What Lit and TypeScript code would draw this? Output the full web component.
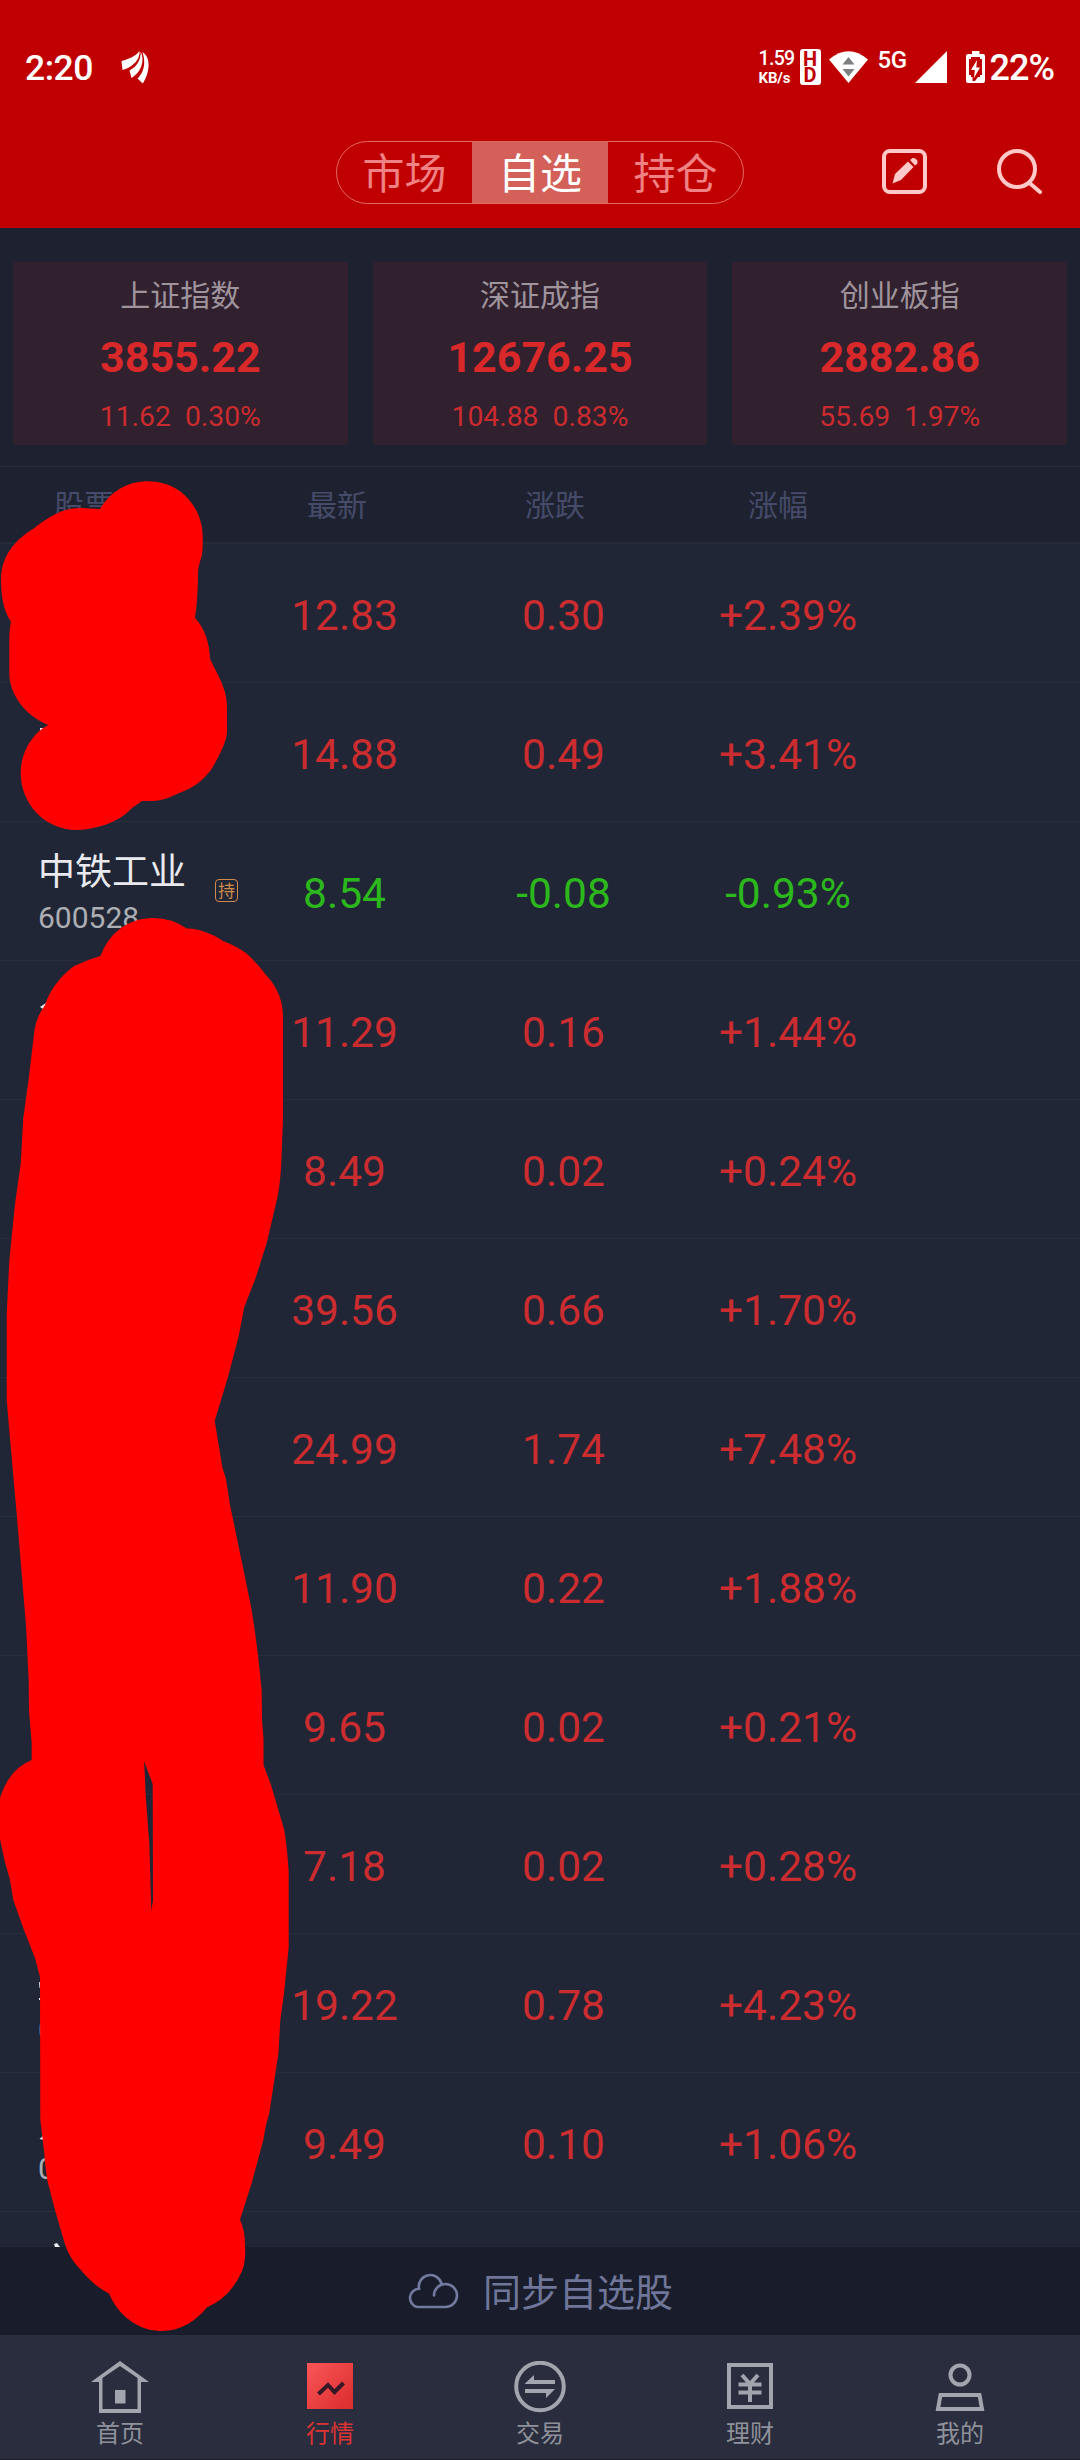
import { LitElement, html, svg, css, nothing } from "lit";
import { customElement, property } from "lit/decorators.js";

interface IndexQuote { name: string; value: string; change: string; pct: string; }
interface Stock { name?: string; code?: string; held?: boolean; price: string; diff: string; pct: string; }

const INDICES: IndexQuote[] = [
  { name: "上证指数", value: "3855.22", change: "11.62", pct: "0.30%" },
  { name: "深证成指", value: "12676.25", change: "104.88", pct: "0.83%" },
  { name: "创业板指", value: "2882.86", change: "55.69", pct: "1.97%" },
];

const STOCKS: Stock[] = [
  { price: "12.83", diff: "0.30", pct: "+2.39%" },
  { price: "14.88", diff: "0.49", pct: "+3.41%" },
  { name: "中铁工业", code: "600528", held: true, price: "8.54", diff: "-0.08", pct: "-0.93%" },
  { price: "11.29", diff: "0.16", pct: "+1.44%" },
  { price: "8.49", diff: "0.02", pct: "+0.24%" },
  { price: "39.56", diff: "0.66", pct: "+1.70%" },
  { price: "24.99", diff: "1.74", pct: "+7.48%" },
  { price: "11.90", diff: "0.22", pct: "+1.88%" },
  { price: "9.65", diff: "0.02", pct: "+0.21%" },
  { price: "7.18", diff: "0.02", pct: "+0.28%" },
  { code: "0", price: "19.22", diff: "0.78", pct: "+4.23%" },
  { code: "0", price: "9.49", diff: "0.10", pct: "+1.06%" },
];

@customElement("status-bar")
export class StatusBar extends LitElement {
  static styles = css`
    :host { display: flex; height: 117px; padding: 17px 26px 0 25px; box-sizing: border-box;
      align-items: center; justify-content: space-between; color: #fff;
      font-family: Roboto, "Liberation Sans", sans-serif; font-weight: 500; }
    svg { display: block; flex: none; }
    .left, .right { display: flex; align-items: center; }
    .time { font-size: 35.5px; line-height: 40px; letter-spacing: -0.5px; margin-top: 2px; }
    .app { margin-left: 28px; }
    .speed { width: 40px; font-size: 19.5px; line-height: 20px; letter-spacing: -0.7px; margin-top: 1px; }
    .unit { font-size: 15px; line-height: 18px; letter-spacing: -0.2px; font-weight: 700; }
    .hd { margin-left: 1px; width: 21px; height: 36px; box-sizing: border-box; border-radius: 3px; background: #fff;
      color: #c00000; display: grid; grid-template-rows: 16px 16px; padding-top: 2px; text-align: center;
      font-size: 20px; line-height: 16px; font-weight: 700; }
    .wifi { margin-left: 8px; }
    .net { font-size: 24px; line-height: 24px; margin: 0 6px 14px 10px; width: 31px; letter-spacing: -0.5px; }
    .battery { margin: 0 5px 0 19px; }
    .pct { font-size: 36px; line-height: 40px; letter-spacing: -1px; margin-top: 2px; }
  `;
  render() {
    return html`
      <div class="left">
        <span class="time">2:20</span>
        <svg class="app" width="29" height="34" viewBox="0 0 29 34" fill="#fff">
          <path d="M0.500 11C8 9 15 6 18.500 1C19.500 9 12 17 1.500 20Z"/>
          <path d="M19.700 1.500C24.500 12 19 23 10.500 28L8.500 20.500C15 17 20 11 19.700 1.500Z"/>
          <path d="M21.500 2C31 8 28 24 21.800 33.500L16.500 28.500C23 22 25 13 21.500 2Z"/>
        </svg>
      </div>
      <div class="right">
        <div class="speed">1.59<div class="unit">KB/s</div></div>
        <div class="hd"><span>H</span><span>D</span></div>
        <svg class="wifi" width="39" height="32" viewBox="0 0 39 32">
          <path d="M0 8.500Q19.500 -8 39 8.500L19.500 32Z" fill="#fff"/>
          <path d="M13.500 13.500L19.500 6L25.500 13.500ZM13.500 18L19.500 25.500L25.500 18Z" fill="#7c8082"/>
        </svg>
        <span class="net">5G</span>
        <svg width="32" height="32" viewBox="0 0 32 32"><path d="M32 0V32H0Z" fill="#fff"/></svg>
        <svg class="battery" width="19" height="32" viewBox="0 0 19 32">
          <path d="M6 0H13.500V3H17Q19 3 19 5V30Q19 32 17 32H2Q0 32 0 30V5Q0 3 2 3H6Z" fill="#fff"/>
          <path d="M5 6H14V8H16V24H14V26H12L9 30H6.500V26H5V24H3V8H5Z" fill="#c00000"/>
          <path d="M11 9L5 19H8.800L8 27L14 16.500H10.300Z" fill="#fff"/>
        </svg>
        <span class="pct">22%</span>
      </div>`;
  }
}

@customElement("top-nav")
export class TopNav extends LitElement {
  static styles = css`
    :host { display: grid; grid-template-columns: 336px 408px 1fr; height: 111px; align-items: start; }
    .tabs { grid-column: 2; margin-top: 24px; height: 63px; box-sizing: border-box; display: grid;
      grid-template-columns: 135px 136px 1fr; border: 1px solid #e26a66; border-radius: 32px;
      overflow: hidden; font: 42px/58px "Noto Sans CJK SC", sans-serif; color: #ee8284; text-align: center; }
    .on { background: #d4605a; color: #fff; margin: -1px 0; line-height: 60px; }
    .tools { display: flex; gap: 70px; padding: 32px 0 0 138px; }
  `;
  render() {
    return html`
      <div class="tabs"><span>市场</span><span class="on">自选</span><span>持仓</span></div>
      <div class="tools">
        <svg width="45" height="45" viewBox="0 0 45 45">
          <rect x="2" y="2" width="41" height="41" rx="6" fill="none" stroke="#ffc9ca" stroke-width="4"/>
          <path d="M10.500 34.500L13 25L26 12.500L31.500 18L19 31ZM28 11L30.500 9Q33 8.500 35 11Q36.500 13.500 35 15L33 16.500Z" fill="#ffc9ca"/>
        </svg>
        <svg width="45" height="45" viewBox="0 0 45 45" fill="none" stroke="#ffc9ca" stroke-width="4" stroke-linecap="round">
          <circle cx="20" cy="20" r="18"/><path d="M32.500 34L43 43"/>
        </svg>
      </div>`;
  }
}

@customElement("index-card")
export class IndexCard extends LitElement {
  @property({ attribute: false }) quote!: IndexQuote;
  static styles = css`
    :host { display: flex; flex-direction: column; align-items: center; background: #31212f;
      border-radius: 3px; height: 183px; font-family: Roboto, sans-serif; }
    .name { font: 30px/40px "Noto Sans CJK SC", sans-serif; color: #9f949c; margin-top: 11px; }
    .value { font-size: 43px; line-height: 50px; font-weight: 700; color: #d9282a; margin-top: 19px; }
    .delta { font-size: 28.3px; line-height: 34px; color: #cb2b2e; margin-top: 18px; white-space: pre; }
  `;
  render() {
    const q = this.quote;
    return html`<div class="name">${q.name}</div><div class="value">${q.value}</div>
      <div class="delta">${q.change}  ${q.pct}</div>`;
  }
}

@customElement("stock-row")
export class StockRow extends LitElement {
  @property({ attribute: false }) stock!: Stock;
  static styles = css`
    :host { display: grid; grid-template-columns: 235px 219px 219px 230px; height: 139px; box-sizing: border-box;
      border-bottom: 1px solid #282d3c; align-items: center; font-family: Roboto, sans-serif; }
    .id { display: flex; align-items: center; justify-content: space-between; height: 138px; padding-left: 38px; margin-right: -3px; }
    .name { font: 37px/48px "Noto Sans CJK SC", sans-serif; color: #e8eaef; height: 48px; margin-top: -3px; }
    .code { font-size: 30px; line-height: 34px; color: #acaeb3; margin-top: 8px; }
    .held { width: 23px; height: 23px; box-sizing: border-box; border: 1px solid #cf8a4c; border-radius: 4px;
      color: #cf8a4c; font: 17px/20px "Noto Sans CJK SC", sans-serif; text-align: center; margin-top: -1px; }
    .num { font-size: 42.5px; line-height: 50px; text-align: center; padding-top: 5px; color: #cb2c2f; }
    .down { color: #2cb81c; }
  `;
  render() {
    const s = this.stock;
    const cls = s.diff.startsWith("-") ? "num down" : "num";
    return html`
      <div class="id">
        <div><div class="name">${s.name ?? nothing}</div><div class="code">${s.code ?? nothing}</div></div>
        ${s.held ? html`<span class="held">持</span>` : nothing}
      </div>
      <span class=${cls}>${s.price}</span><span class=${cls}>${s.diff}</span><span class=${cls}>${s.pct}</span>`;
  }
}

const G = "#a3a5ae";
const NAV = [
  { label: "首页", icon: svg`
      <path fill-rule="evenodd" fill=${G} d="M30 0L59 21H51V52H9V21H1ZM30 5L12.500 17V48H47.500V17Z"/>
      <rect x="25" y="29" width="10.500" height="13.500" fill=${G}/>` },
  { label: "行情", on: true, icon: svg`<defs><linearGradient id="g" x1="0" y1="0" x2="1" y2="1">
      <stop offset="0" stop-color="#fb5658"/><stop offset="1" stop-color="#d92c2d"/></linearGradient></defs>
      <rect x="7" y="2" width="46" height="46" fill="url(#g)"/>
      <path d="M18.500 33L28 24L34.500 31L43.500 22" fill="none" stroke="#351926" stroke-width="4"/>` },
  { label: "交易", icon: svg`<circle cx="30" cy="25.500" r="23.800" fill="none" stroke=${G} stroke-width="4"/>
      <path d="M15 22.500L24 14V19H45V23H15ZM45 28H15V32H36V37Z" fill=${G}/>` },
  { label: "理财", icon: svg`<rect x="9" y="4" width="42" height="42" fill="none" stroke=${G} stroke-width="4"/>
      <path d="M22 14L30 23L38 14M18.500 23.500H41.500M18.500 31.500H41.500M30 22V41" fill="none" stroke=${G} stroke-width="4"/>` },
  { label: "我的", icon: svg`<circle cx="30" cy="14" r="9.500" fill="none" stroke=${G} stroke-width="4"/>
      <path d="M10.500 34H49.500L52 48H8Z" fill="none" stroke=${G} stroke-width="4"/>` },
];

@customElement("bottom-nav")
export class BottomNav extends LitElement {
  static styles = css`
    :host { display: grid; grid-template-columns: repeat(5, 1fr); padding: 26px 15px 0; height: 125px;
      box-sizing: border-box; background: #292d3d; border-bottom: 1px solid #1b1c2b; }
    .item { display: flex; flex-direction: column; align-items: center; gap: 2px;
      font: 24px/34px "Noto Sans CJK SC", sans-serif; color: #90929b; }
    .on { color: #dc3435; }
  `;
  render() {
    return NAV.map(n => html`<div class="item ${n.on ? "on" : ""}">
      <svg width="60" height="52" viewBox="0 0 60 52">${n.icon}</svg><span>${n.label}</span></div>`);
  }
}

@customElement("app-root")
export class AppRoot extends LitElement {
  static styles = css`
    :host { display: flex; flex-direction: column; position: relative; width: 1080px; height: 2460px;
      overflow: hidden; background: #1e2230; }
    .top { background: #c00000; height: 228px; flex: none; }
    .indices { display: grid; grid-template-columns: repeat(3, 1fr); gap: 25px; padding: 34px 13px 21px; flex: none; }
    .head { display: grid; grid-template-columns: 228px 218px 218px 228px; height: 78px; flex: none; box-sizing: border-box;
      border-top: 1px solid #282c3b; border-bottom: 2px solid #262b3b; text-align: center;
      font: 30px/73px "Noto Sans CJK SC", sans-serif; color: #454b68; }
    .first { text-align: left; padding-left: 54px; }
    .list { flex: 1; min-height: 0; overflow: hidden; background: #202635; }
    .sync { flex: none; height: 88px; display: flex; align-items: center; padding-left: 405px; gap: 24px;
      background: #191c2a; color: #6f7699; font: 38px/84px "Noto Sans CJK SC", sans-serif; }
    .sync span { margin-top: -2px; }
    .ink { position: absolute; left: 0; top: 0; pointer-events: none; }
    bottom-nav { flex: none; }
  `;
  render() {
    return html`
      <div class="top"><status-bar></status-bar><top-nav></top-nav></div>
      <div class="indices">${INDICES.map(q => html`<index-card .quote=${q}></index-card>`)}</div>
      <div class="head"><span class="first">股票</span><span>最新</span><span>涨跌</span><span>涨幅</span></div>
      <div class="list">${STOCKS.map(s => html`<stock-row .stock=${s}></stock-row>`)}</div>
      <div class="sync">
        <svg width="54" height="36" viewBox="0 0 54 36" fill="none" stroke="#737a9f" stroke-width="2.600" stroke-linecap="round">
          <path d="M12 34H40.500A11.500 11.500 0 1 0 29 22.500M12 34A9.300 9.300 0 0 1 14 15.700A11.500 11.500 0 0 1 36.700 11.500"/>
        </svg>
        <span>同步自选股</span>
      </div>
      <bottom-nav></bottom-nav>
      <svg class="ink" width="300" height="2460" viewBox="0 0 300 2460">
        <path fill="#e8eaef" d="M40 728H48V731H43V733H40ZM40 1007L46 1003V1009H43ZM39 1982L42 1983V1988H39.500ZM39 1998H42V2000H39ZM39.500 2139L44 2135V2140ZM54 2244L57 2243L60 2247H55Z"/>
        <path fill="#ff0000" d="M100 509C111 491 128 481.300 148 481.300C181 481.300 202.700 508 202.700 536.700Q203 548 202 555Q198 567 198 573Q198 598 195 618Q209 633 210 659L218 675Q227 692 227 707V733Q226 745 211 770C200 784 190 789 177 794Q163 801 153 801H142L132 808C118 823 97 829 77 830C44 830 20.700 803 20.700 773C20.700 751 34 732 48.300 725C26 716 9.300 695 9.300 673V640Q9.300 629 11 621.700C5 613 1 600 1 580C1 556 15 540 33 529C50 516 62 508 80 508Z"/>
        <path fill="#ff0000" fill-rule="evenodd" d="M100.700 955.700C109 933 128 917.900 153.300 917.900Q172 918 186.700 928.500C197 928 211 933 223 941Q236 946 246 953Q257 963 266 975Q283 993 283 1017V1118L281.500 1157Q281 1178 277.700 1196L266.700 1243L256 1277L244.300 1307L238.700 1336L228 1377L214.700 1421L222.300 1467L226 1479L230 1505L238.300 1545L250.700 1605Q257 1640 261.700 1691L262 1720L263.500 1739V1765L270.700 1784L284 1829Q287 1845 288.700 1872V1947L284 1993L280.300 2020L278.500 2053L274.300 2080L269.300 2113L266 2125L263.300 2140L251.700 2183L240 2219.500Q245 2231 245 2245Q246 2262 242 2271Q231 2297 206.700 2307.500C196 2321 181 2331 161.700 2331C138 2331 118 2315 109 2293.500C98 2288 89 2280 80 2269Q69 2258 64.300 2242L55 2210L47.700 2182Q45 2166 44.300 2153L40.300 2120L40 1977L35 1958L24 1930L13.300 1900L10 1880L4.700 1861L0 1839V1798Q9 1769 31.700 1760V1743L29 1711L28.700 1680L26 1625L16.700 1514L9 1427L6.700 1400V1314L9.300 1261L15 1204L20.700 1164L23.300 1118L28.700 1079L34.500 1030Q36 1018 45 1005Q52 983 74 966Q87 960 100.700 955.700ZM144 1761L152.700 1784L153 1900L151.300 1911L149.300 1843L145.700 1796L145 1778Z"/>
      </svg>`;
  }
}
